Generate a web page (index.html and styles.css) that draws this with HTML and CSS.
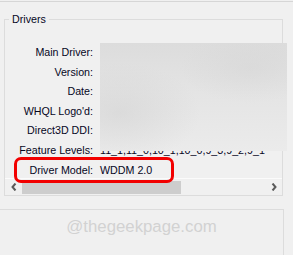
FILE: index.html
```html
<!DOCTYPE html>
<html lang="en">
<head>
    <meta charset="UTF-8">
    <title>Drivers</title>
    <link rel="stylesheet" href="styles.css">
</head>
<body>
    <div class="topline"></div>

    <fieldset class="drivers">
        <legend>Drivers</legend>
        <div class="scroller">
            <div class="rows">
                <span class="label">Main Driver:</span><span class="value"></span>
                <span class="label">Version:</span><span class="value"></span>
                <span class="label">Date:</span><span class="value"></span>
                <span class="label">WHQL Logo'd:</span><span class="value"></span>
                <span class="label">Direct3D DDI:</span><span class="value"></span>
                <span class="label">Feature Levels:</span><span class="value">11_1,11_0,10_1,10_0,9_3,9_2,9_1</span>
                <span class="label">Driver Model:</span><span class="value">WDDM 2.0</span>
            </div>
            <div class="hscroll">
                <span class="arrow">
                    <svg width="6" height="8" viewBox="0 0 6 8"><path d="M4.5 0.5 L1.5 4 L4.5 7.5" fill="none" stroke="#5a5a5a" stroke-width="2"/></svg>
                </span>
                <div class="track"><div class="thumb"></div></div>
                <span class="arrow">
                    <svg width="6" height="8" viewBox="0 0 6 8"><path d="M1.5 0.5 L4.5 4 L1.5 7.5" fill="none" stroke="#5a5a5a" stroke-width="2"/></svg>
                </span>
            </div>
        </div>
    </fieldset>

    <!-- blurred values and the red highlight sit on top of the panel -->
    <div class="blur"></div>
    <div class="highlight"></div>

    <div class="notes">
        <span class="watermark">@thegeekpage.com</span>
    </div>
</body>
</html>
```

FILE: styles.css
```css
body {
    margin: 0;
    background-color: #f0f0f0;
    font-family: "Liberation Sans", Arial, sans-serif;
    font-size: 10.7px;
    color: #06061e;
    overflow: hidden;
}
.topline {
    margin-top: 1px;
    height: 1px;
    background: #d6d6d6;
}
.drivers {
    box-sizing: border-box;
    margin: 10px 0 0 4px;
    padding: 0;
    width: 279px;
    height: 184px;
    border: 1px solid #dcdcdc;
    min-inline-size: 0;
}
.drivers legend {
    margin-left: 4px;
    padding: 0 3px;
    line-height: 14px;
}
.scroller {
    display: flex;
    flex-direction: column;
    height: 169px;
}
.rows {
    flex: 1;
    overflow: hidden;
    padding-top: 17px;
    display: grid;
    grid-template-columns: 88px 1fr;
    grid-auto-rows: 19.6px;
    column-gap: 7px;
    align-content: start;
    line-height: 19.6px;
}
.label {
    text-align: right;
    white-space: nowrap;
}
.value {
    white-space: nowrap;
}
.hscroll {
    height: 16px;
    border-top: 1px solid #fbfbfb;
    display: flex;
    align-items: stretch;
}
.arrow {
    width: 17px;
    display: flex;
    align-items: center;
    justify-content: center;
}
.track {
    flex: 1;
    padding: 2px 0 1px;
}
.thumb {
    width: 159px;
    height: 100%;
    background: #cdcdcd;
}
.blur {
    position: absolute;
    left: 100px;
    top: 43px;
    width: 187px;
    height: 108px;
    background:
        radial-gradient(ellipse 80px 50px at 20px 70px, rgba(205, 205, 205, 0.45), rgba(205, 205, 205, 0)),
        radial-gradient(ellipse 70px 35px at 150px 25px, rgba(210, 210, 210, 0.4), rgba(210, 210, 210, 0)),
        linear-gradient(180deg, #dcdcdc 0%, #e4e4e4 45%, #ebebeb 100%);
}
.highlight {
    position: absolute;
    left: 14px;
    top: 157px;
    width: 160px;
    height: 26px;
    box-sizing: border-box;
    border: 3px solid #f20000;
    border-radius: 7px;
}
.notes {
    box-sizing: border-box;
    margin: 13px 0 0 -1px;
    width: 285px;
    height: 46px;
    border: 1px solid #dcdcdc;
    border-bottom: none;
    text-align: center;
    padding-top: 7px;
}
.watermark {
    font-size: 16.8px;
    color: #d2d2d2;
}
```
